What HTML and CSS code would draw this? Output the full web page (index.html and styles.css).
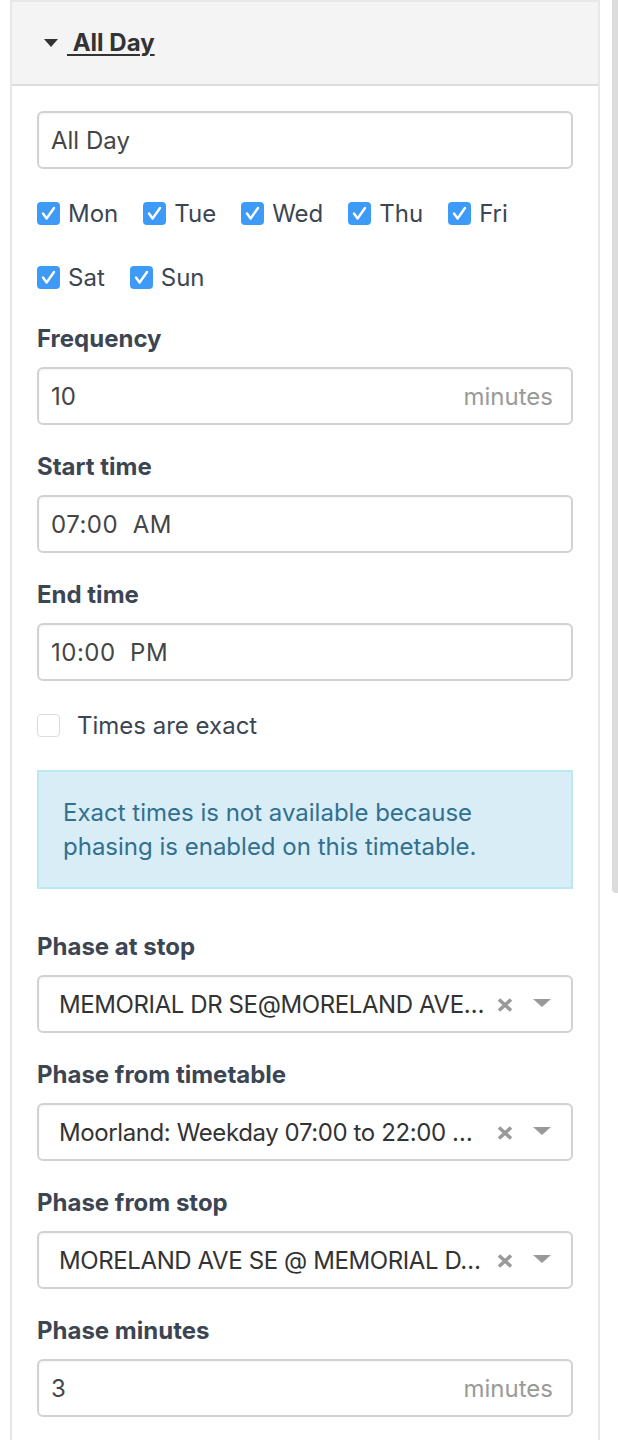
FILE: index.html
```html
<!DOCTYPE html>
<html lang="en">
<head>
<meta charset="utf-8">
<title>Timetable period</title>
<link rel="stylesheet" href="styles.css">
</head>
<body>
<div class="page">
  <section class="panel">
    <header class="panel-header">
      <svg class="caret" width="14" height="8" viewBox="0 0 14 8"><path d="M0 0h14L7 8z" fill="#333"/></svg>
      <a class="panel-title" href="#">&nbsp;All Day</a>
    </header>
    <div class="panel-body">
      <div class="form-control first">All Day</div>

      <div class="days">
        <label class="day"><span class="box checked"><svg viewBox="0 0 23 23" width="23" height="23"><path d="M6 11.5l3.6 5 7.4-10.5" fill="none" stroke="#fff" stroke-width="2.4" stroke-linecap="round" stroke-linejoin="round"/></svg></span>Mon</label>
        <label class="day"><span class="box checked"><svg viewBox="0 0 23 23" width="23" height="23"><path d="M6 11.5l3.6 5 7.4-10.5" fill="none" stroke="#fff" stroke-width="2.4" stroke-linecap="round" stroke-linejoin="round"/></svg></span>Tue</label>
        <label class="day"><span class="box checked"><svg viewBox="0 0 23 23" width="23" height="23"><path d="M6 11.5l3.6 5 7.4-10.5" fill="none" stroke="#fff" stroke-width="2.4" stroke-linecap="round" stroke-linejoin="round"/></svg></span>Wed</label>
        <label class="day"><span class="box checked"><svg viewBox="0 0 23 23" width="23" height="23"><path d="M6 11.5l3.6 5 7.4-10.5" fill="none" stroke="#fff" stroke-width="2.4" stroke-linecap="round" stroke-linejoin="round"/></svg></span>Thu</label>
        <label class="day"><span class="box checked"><svg viewBox="0 0 23 23" width="23" height="23"><path d="M6 11.5l3.6 5 7.4-10.5" fill="none" stroke="#fff" stroke-width="2.4" stroke-linecap="round" stroke-linejoin="round"/></svg></span>Fri</label>
        <label class="day"><span class="box checked"><svg viewBox="0 0 23 23" width="23" height="23"><path d="M6 11.5l3.6 5 7.4-10.5" fill="none" stroke="#fff" stroke-width="2.4" stroke-linecap="round" stroke-linejoin="round"/></svg></span>Sat</label>
        <label class="day"><span class="box checked"><svg viewBox="0 0 23 23" width="23" height="23"><path d="M6 11.5l3.6 5 7.4-10.5" fill="none" stroke="#fff" stroke-width="2.4" stroke-linecap="round" stroke-linejoin="round"/></svg></span>Sun</label>
      </div>

      <div class="group">
        <div class="label">Frequency</div>
        <div class="form-control"><span class="value">10</span><span class="addon">minutes</span></div>
      </div>

      <div class="group">
        <div class="label">Start time</div>
        <div class="form-control"><span class="value time">07:00&nbsp;&nbsp;AM</span></div>
      </div>

      <div class="group last">
        <div class="label">End time</div>
        <div class="form-control"><span class="value time">10:00&nbsp;&nbsp;PM</span></div>
      </div>

      <label class="exact"><span class="box empty"></span>Times are exact</label>

      <div class="alert">Exact times is not available because phasing is enabled on this timetable.</div>

      <div class="group">
        <div class="label">Phase at stop</div>
        <div class="form-control select">
          <span class="select-value">MEMORIAL DR SE@MORELAND AVE…</span>
          <svg class="clear" width="16" height="14" viewBox="0 0 16 14"><path d="M2 1.5l12 11M14 1.5l-12 11" stroke="#9a9a9a" stroke-width="3.6"/></svg>
          <svg class="arrow" width="18" height="8" viewBox="0 0 18 8"><path d="M0 0h18L9 8z" fill="#999"/></svg>
        </div>
      </div>

      <div class="group">
        <div class="label">Phase from timetable</div>
        <div class="form-control select">
          <span class="select-value">Moorland: Weekday 07:00 to 22:00 …</span>
          <svg class="clear" width="16" height="14" viewBox="0 0 16 14"><path d="M2 1.5l12 11M14 1.5l-12 11" stroke="#9a9a9a" stroke-width="3.6"/></svg>
          <svg class="arrow" width="18" height="8" viewBox="0 0 18 8"><path d="M0 0h18L9 8z" fill="#999"/></svg>
        </div>
      </div>

      <div class="group">
        <div class="label">Phase from stop</div>
        <div class="form-control select">
          <span class="select-value">MORELAND AVE SE @ MEMORIAL D…</span>
          <svg class="clear" width="16" height="14" viewBox="0 0 16 14"><path d="M2 1.5l12 11M14 1.5l-12 11" stroke="#9a9a9a" stroke-width="3.6"/></svg>
          <svg class="arrow" width="18" height="8" viewBox="0 0 18 8"><path d="M0 0h18L9 8z" fill="#999"/></svg>
        </div>
      </div>

      <div class="group">
        <div class="label">Phase minutes</div>
        <div class="form-control"><span class="value">3</span><span class="addon">minutes</span></div>
      </div>
    </div>
  </section>
  <div class="scrollbar"></div>
</div>
</body>
</html>
```

FILE: styles.css
```css
* { box-sizing: border-box; }

html, body {
  margin: 0;
  padding: 0;
  background: #fff;
}

body {
  font-family: Inter, "Liberation Sans", sans-serif;
  font-size: 24px;
  color: #3c4653;
}

.page {
  position: relative;
  width: 618px;
  height: 1440px;
  overflow: hidden;
  padding-left: 10px;
}

.panel {
  width: 590px;
  min-height: 1460px;
  border: 2px solid #e8e8e8;
  background: #fff;
}

.panel-header {
  height: 84px;
  background: #f4f4f4;
  border-bottom: 2px solid #dddddd;
  display: flex;
  align-items: center;
  padding-left: 32px;
  padding-bottom: 1px;
}

.caret { margin-right: 9px; margin-top: 1px; }

.panel-title {
  color: #333;
  font-weight: 700;
  font-size: 24px;
  text-decoration: underline;
  text-decoration-thickness: 2px;
  text-underline-offset: 3px;
}

.panel-body {
  padding: 25px 25px 0 25px;
}

.form-control {
  height: 58px;
  border: 2px solid #d2d2d2;
  border-radius: 6px;
  box-shadow: inset 0 1px 2px rgba(0,0,0,0.05);
  display: flex;
  align-items: center;
  padding: 0 18px 0 12px;
  color: #454545;
  font-size: 24px;
}

.value { flex: 1; }
.time { letter-spacing: 0.5px; }

.addon { color: #9a9a9a; }

.days {
  display: flex;
  flex-wrap: wrap;
  column-gap: 25px;
  row-gap: 28px;
  margin: 26px 0 30px;
}

.day, .exact {
  display: flex;
  align-items: center;
  height: 36px;
  gap: 8px;
  color: #3c4653;
}

.box {
  width: 23px;
  height: 23px;
  border-radius: 4px;
  flex: none;
  display: block;
}

.box svg { display: block; }

.checked { background: #3d9bf7; }

.empty {
  background: #fff;
  border: 1px solid #dcdcdc;
}

.group { margin-bottom: 28px; }
.group.last { margin-bottom: 26px; }

.label {
  font-weight: 700;
  line-height: 28px;
  margin-bottom: 14px;
  color: #3c4653;
}

.exact { gap: 17px; margin-bottom: 27px; }

.alert {
  background: #d9edf7;
  border: 2px solid #bce8f1;
  color: #31708f;
  line-height: 34px;
  padding: 24px 24px 23px 24px;
  margin-bottom: 44px;
}

.select { padding: 0 20px 0 20px; }

.select-value {
  flex: 1;
  min-width: 0;
  white-space: nowrap;
  overflow: hidden;
  text-overflow: ellipsis;
  color: #333;
  letter-spacing: -0.4px;
  margin-right: 5px;
}

.clear { flex: none; margin-right: 20px; margin-top: 2px; }
.arrow { flex: none; margin-bottom: 2px; }

.scrollbar {
  position: absolute;
  left: 612px;
  top: 0;
  width: 6px;
  height: 893px;
  background: #dcdcdc;
  border-radius: 0 0 0 4px;
}
```
